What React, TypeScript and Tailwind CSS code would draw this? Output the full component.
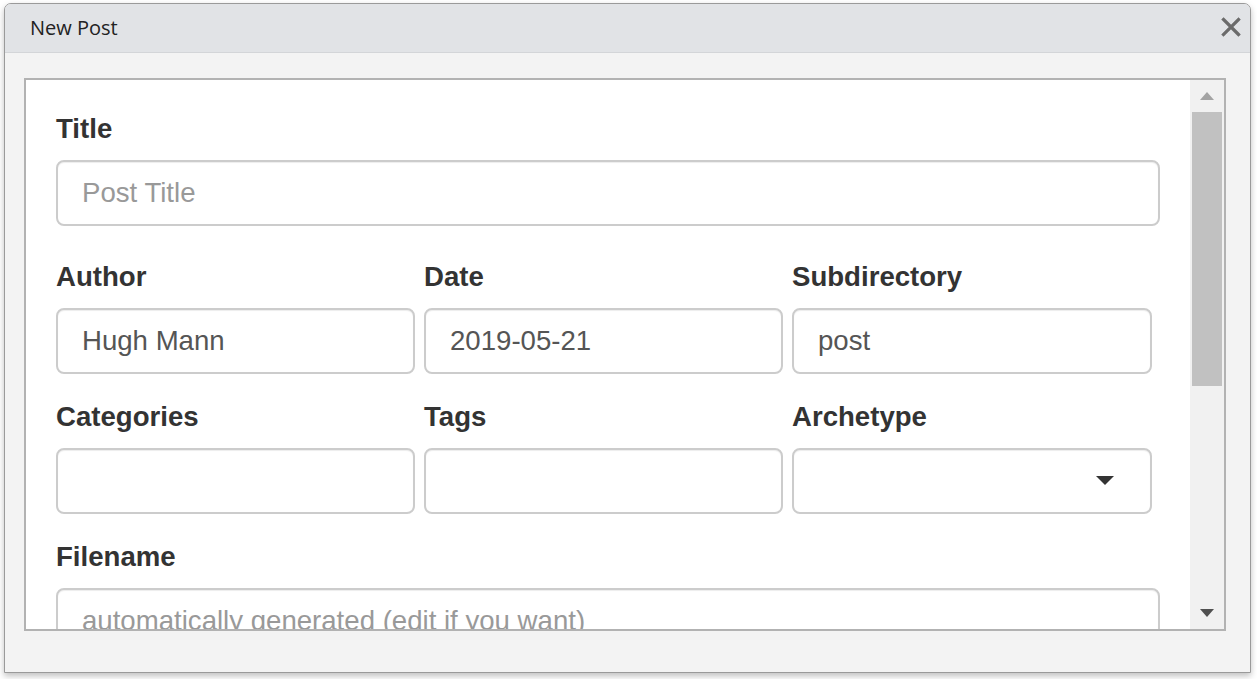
import React from 'react';

const labelCls =
  'block h-[37px] leading-[37px] mb-[13px] text-[27.6px] font-bold text-[#333333]';
const inputCls =
  'block w-full h-[66px] rounded-[8px] border-2 border-[#cccccc] bg-white px-[24px] text-[27.6px] text-[#555555] placeholder:text-[#999999] outline-none shadow-[inset_0_1px_1px_rgba(0,0,0,0.075)]';

function Field({
  label,
  value,
  placeholder,
  select,
}: {
  label: string;
  value?: string;
  placeholder?: string;
  select?: boolean;
}) {
  return (
    <div className="flex flex-col">
      <label className={labelCls}>{label}</label>
      {select ? (
        <div className={`${inputCls} relative`}>
          <svg
            className="absolute right-[35px] top-[25px]"
            width="20"
            height="11"
            viewBox="0 0 20 11"
          >
            <path d="M1 1 L19 1 L10 10 Z" fill="#333333" />
          </svg>
        </div>
      ) : (
        <input className={inputCls} defaultValue={value} placeholder={placeholder} />
      )}
    </div>
  );
}

export default function App() {
  return (
    <div
      className="relative h-[679px] w-[1257px] overflow-hidden bg-white pl-[4px] pt-[3px]"
      style={{ fontFamily: '"Liberation Sans", Arial, sans-serif' }}
    >
      <div className="flex h-[670px] w-[1247px] flex-col overflow-hidden rounded-t-[7px] border border-[#9a9a9a] bg-[#f3f3f3] shadow-[0_3px_6px_rgba(0,0,0,0.25)]">
        {/* title bar */}
        <div className="flex h-[49px] shrink-0 items-center justify-between border-b border-[#d3d5d8] bg-[#e1e3e6] pl-[25px] pr-[9px]">
          <span
            className="text-[20px] text-[#222222]"
            style={{ fontFamily: '"Open Sans", "Noto Sans", sans-serif' }}
          >
            New Post
          </span>
          <svg width="20" height="20" viewBox="0 0 20 20" className="mt-[-2px]">
            <path
              d="M2.5 2.5 L17.5 17.5 M17.5 2.5 L2.5 17.5"
              stroke="#6b6b6b"
              strokeWidth="3.2"
              strokeLinecap="square"
            />
          </svg>
        </div>

        {/* body */}
        <div className="pl-[19px] pt-[25px]">
          <div className="flex h-[553px] w-[1202px] overflow-hidden border-2 border-[#b2b2b2] bg-white">
            <div className="h-full flex-1 overflow-hidden px-[30px] pt-[30px]">
              <div className="mb-[32px]">
                <Field label="Title" placeholder="Post Title" />
              </div>
              <div className="grid grid-cols-[359px_359px_360px] gap-x-[9px] gap-y-[24px] pr-[7px]">
                <Field label="Author" value="Hugh Mann" />
                <Field label="Date" value="2019-05-21" />
                <Field label="Subdirectory" value="post" />
                <Field label="Categories" />
                <Field label="Tags" />
                <Field label="Archetype" select />
              </div>
              <div className="mt-[24px]">
                <Field label="Filename" placeholder="automatically generated (edit if you want)" />
              </div>
            </div>

            {/* scrollbar */}
            <div className="flex h-full w-[34px] shrink-0 flex-col bg-[#f1f1f1]">
              <div className="flex h-[32px] items-center justify-center">
                <svg width="14" height="8" viewBox="0 0 14 8">
                  <path d="M0 8 L14 8 L7 0 Z" fill="#a3a3a3" />
                </svg>
              </div>
              <div className="mx-[2px] h-[274px] bg-[#c1c1c1]" />
              <div className="flex-1" />
              <div className="flex h-[32px] items-center justify-center">
                <svg width="14" height="8" viewBox="0 0 14 8">
                  <path d="M0 0 L14 0 L7 8 Z" fill="#505050" />
                </svg>
              </div>
            </div>
          </div>
        </div>
      </div>
    </div>
  );
}
